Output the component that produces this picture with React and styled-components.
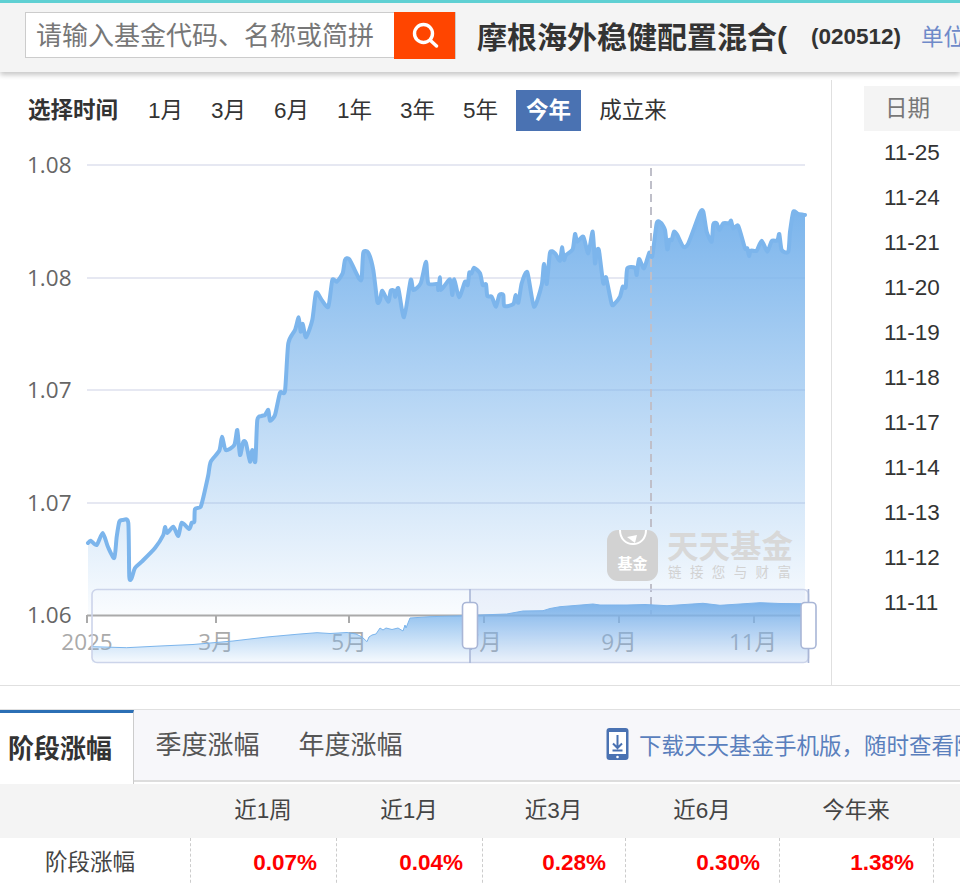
import React from "react";
import styled, { createGlobalStyle } from "styled-components";

const FONT = `"Liberation Sans", "Noto Sans CJK SC", sans-serif`;
const CHART_FONT = `"Open Sans", "Noto Sans CJK SC", sans-serif`;

const GlobalStyle = createGlobalStyle`
  html, body {
    margin: 0;
    height: 885px;
    overflow: hidden;
    background: #fff;
    font-family: ${FONT};
    color: #333;
  }
  * { box-sizing: border-box; }
`;

const ranges = ["1月", "3月", "6月", "1年", "3年", "5年", "今年", "成立来"];
const dates = ["11-25", "11-24", "11-21", "11-20", "11-19", "11-18", "11-17", "11-14", "11-13", "11-12", "11-11"];
const periods = ["近1周", "近1月", "近3月", "近6月", "今年来"];
const returns = ["0.07%", "0.04%", "0.28%", "0.30%", "1.38%"];

// traced from the chart, in page pixels
const line = [
  [88, 543], [90.7, 540.7], [96.7, 545], [102.7, 533], [108, 547], [114.3, 558], [116.7, 536.7], [119.3, 521.7],
  [123.3, 520], [128.3, 523], [129.3, 576.7], [131.7, 578], [135, 568], [141.7, 561.7], [155, 548], [163.3, 535],
  [165, 527], [167.3, 533], [173.3, 526.7], [178.3, 536], [181.7, 522.7], [189.3, 529], [191.7, 522.7], [194.3, 521.7],
  [195, 509], [200.7, 506.7], [205, 490], [208.3, 475], [210.7, 461.7], [219.3, 450.7], [222, 436.7], [225.7, 450],
  [234.3, 445], [237.3, 430], [240, 455], [243.3, 441.7], [246, 443], [250, 461.7], [252.3, 450], [255.3, 461.7],
  [257.3, 420], [261.7, 416], [265, 415], [268.3, 410], [270, 420.7], [275, 415], [280, 392.7], [285, 391],
  [288.3, 343.3], [295, 330], [298.7, 317.3], [300.7, 331.7], [302.7, 324], [306, 337.3], [312.3, 320], [316, 292.7],
  [321.7, 300], [328.3, 306.7], [332.3, 280], [336.7, 281.7], [342.7, 273.3], [345, 260], [349.3, 259.3], [359.3, 279],
  [361.7, 278.3], [363.3, 252.7], [368.3, 252.7], [373.3, 270], [377.3, 301.7], [380, 300], [382.3, 290.7], [388.3, 301.7],
  [390.7, 290.7], [394, 290.7], [395.3, 296.7], [398.3, 288.3], [404, 317.3], [410.7, 280], [413.3, 290], [420.7, 283.3],
  [426, 261.7], [428.3, 283.3], [437.3, 284], [438.3, 290], [440, 277.3], [441, 290], [450, 279.3], [452.3, 295],
  [454.3, 279.3], [459, 297.3], [465, 281.7], [467.7, 285], [469.3, 272.7], [471.7, 273.3], [474, 267.7], [480, 273.3],
  [482.7, 285], [486, 284.3], [487.3, 296], [491.7, 296.7], [496, 306.7], [499.3, 295], [503.3, 295], [504.3, 306],
  [513.3, 304], [515.7, 295], [518.3, 302.7], [521.7, 283.3], [527.3, 272.3], [534, 306.7], [541.7, 285], [544, 264],
  [546.7, 284], [550, 252.7], [555, 253.3], [560, 260.7], [562, 247.3], [564, 260], [566, 255], [572.7, 249.3],
  [575, 234], [577.3, 241.7], [583.3, 236.7], [588.3, 253.3], [592.7, 231.7], [595, 263.3], [596.7, 250.7], [599, 250.7],
  [603.3, 283.3], [606, 277.3], [611.7, 304], [615, 303.3], [620, 296.7], [622.7, 286.7], [625.7, 287.3], [627.3, 268.3],
  [635, 267.7], [636.7, 275], [639, 259], [644, 268.3], [649.3, 252.7], [652.3, 256], [656.7, 223.3], [660.7, 222.7],
  [665, 230], [667.3, 249.3], [669.3, 240], [671.7, 240], [674, 231.7], [677.3, 235], [683.3, 246.7], [688.3, 243.3],
  [700, 212.7], [703.3, 211.7], [706.7, 231.7], [711.7, 241.7], [713.3, 224.3], [716.7, 223.3], [719.3, 230], [723.3, 223.3],
  [729.3, 223.3], [731, 220.7], [733.3, 228.3], [738.3, 226], [745, 248.3], [747.3, 248.3], [749, 256], [750.7, 250.7],
  [756.7, 250.7], [761.7, 240.7], [767.3, 251.7], [771.7, 241], [777.3, 240.7], [779.3, 234], [781.7, 250], [788.3, 251.7],
  [790, 231.7], [793.3, 211.7], [798.3, 214], [805, 215],
];

const miniLine = [
  [92, 646.7], [126.7, 647.7], [160, 646], [193, 644.5], [233, 641], [267, 637], [300, 634], [317, 632.7], [330, 633.5], [347, 632.5],
  [356, 634], [362, 637], [367, 641.7], [369, 637], [372, 635], [376, 634], [380, 628], [383, 630], [386, 628], [392, 629.5],
  [398, 628], [403, 631], [405, 625], [406, 628], [410, 618], [430, 616.7], [463, 615.7], [480, 615], [506.7, 614], [523, 611],
  [543, 610.7], [550, 608.5], [560, 606.7], [575, 605.5], [593, 604], [600, 605], [627, 605], [645, 604.5], [667, 605.7], [703, 603.3],
  [720, 605.3], [740, 604], [760, 602.7], [780, 603.5], [800, 603.7], [808, 604],
];

const smooth = (pts) => {
  let d = `M${pts[0][0]} ${pts[0][1]}`;
  for (let i = 0; i < pts.length - 1; i++) {
    const p0 = pts[i - 1] || pts[i];
    const p1 = pts[i];
    const p2 = pts[i + 1];
    const p3 = pts[i + 2] || p2;
    const c1x = p1[0] + (p2[0] - p0[0]) / 9;
    const c1y = p1[1] + (p2[1] - p0[1]) / 9;
    const c2x = p2[0] - (p3[0] - p1[0]) / 9;
    const c2y = p2[1] - (p3[1] - p1[1]) / 9;
    d += `C${c1x.toFixed(1)} ${c1y.toFixed(1)} ${c2x.toFixed(1)} ${c2y.toFixed(1)} ${p2[0]} ${p2[1]}`;
  }
  return d;
};

const linePath = smooth(line);
const miniPath = `M${miniLine.map((p) => p.join(" ")).join("L")}`;

const Chart = () => (
  <ChartSvg viewBox="0 131 831 554">
    <defs>
      <linearGradient id="areaFill" gradientUnits="userSpaceOnUse" x1="0" y1="212" x2="0" y2="615">
        <stop offset="0" stopColor="#7cb5ec" />
        <stop offset="1" stopColor="#7cb5ec" stopOpacity="0.04" />
      </linearGradient>
      <linearGradient id="miniFill" gradientUnits="userSpaceOnUse" x1="0" y1="602" x2="0" y2="663">
        <stop offset="0" stopColor="#7cb5ec" />
        <stop offset="1" stopColor="#7cb5ec" stopOpacity="0.06" />
      </linearGradient>
    </defs>

    {[165, 278, 390, 503].map((y) => (
      <line key={y} x1="87" x2="805" y1={y} y2={y} stroke="#e6e8f2" strokeWidth="2" />
    ))}
    {[["1.08", 165], ["1.08", 278], ["1.07", 390], ["1.07", 503], ["1.06", 615]].map(([t, y]) => (
      <AxisText key={y} x="27" y={y + 8}>{t}</AxisText>
    ))}

    <path d={`${linePath}L805 615L88 615Z`} fill="url(#areaFill)" />
    <path d={linePath} fill="none" stroke="#7cb5ec" strokeWidth="4" strokeLinejoin="round" strokeLinecap="round" />

    <line x1="87" x2="805" y1="615.5" y2="615.5" stroke="#aaa" strokeWidth="2" />
    {[87, 216, 349, 484, 619, 754].map((x) => (
      <line key={x} x1={x} x2={x} y1="615" y2="623" stroke="#aaa" strokeWidth="2" />
    ))}
    {[["2025", 87], ["3月", 216], ["5月", 349], ["7月", 484], ["9月", 619], ["11月", 753]].map(([t, x]) => (
      <TickText key={t} x={x} y="650">{t}</TickText>
    ))}

    <line x1="651" x2="651" y1="168" y2="615" stroke="#bfbfc9" strokeWidth="2" strokeDasharray="8 5" />

    <g>
      <rect x="607" y="530" width="51" height="51" rx="11" fill="#d2d2d2" />
      <path d="M620 530c0 9 6 14 13 14s13-5 13-14" fill="none" stroke="#fff" strokeWidth="2" />
      <path d="M627 537l10-2-2 8z" fill="#fff" />
      <WatermarkBadge x="632.5" y="569">基金</WatermarkBadge>
      <WatermarkTitle x="667" y="558">天天基金</WatermarkTitle>
      <WatermarkSub x="668" y="577">链接您与财富</WatermarkSub>
    </g>

    <path d={`${miniPath}L808 663L92 663Z`} fill="url(#miniFill)" />
    <path d={miniPath} fill="none" stroke="#7cb5ec" strokeWidth="1" />
    <rect x="470" y="589.5" width="338.5" height="73" fill="#87a5e0" fillOpacity="0.1" />
    <rect x="92" y="589.5" width="716.5" height="73" rx="5" fill="none" stroke="#ccd4ea" strokeWidth="1.6" />
    {[470, 808.5].map((x) => (
      <g key={x}>
        <line x1={x} x2={x} y1="589" y2="663" stroke="#a9b6d6" strokeWidth="1.6" />
        <rect x={x - 7.5} y="602.5" width="15" height="46" rx="4" fill="#fff" stroke="#a9b6d6" strokeWidth="1.6" />
      </g>
    ))}
  </ChartSvg>
);

const App = () => (
  <>
    <GlobalStyle />
    <Header>
      <SearchBox>
        <SearchInput placeholder="请输入基金代码、名称或简拼" />
        <SearchButton>
          <svg width="28" height="26" viewBox="0 0 28 26" fill="none" stroke="#fff" strokeLinecap="round">
            <circle cx="12.5" cy="11.5" r="9" strokeWidth="3.4" />
            <path d="M19.5 18.5l6 5.5" strokeWidth="3.4" />
          </svg>
        </SearchButton>
      </SearchBox>
      <FundName>摩根海外稳健配置混合(</FundName>
      <FundCode>(020512)</FundCode>
      <UnitLink>单位净值</UnitLink>
    </Header>

    <Main>
      <ChartPanel>
        <RangeBar>
          <RangeLabel>选择时间</RangeLabel>
          {ranges.map((r) => (
            <RangeItem key={r} $active={r === "今年"}>{r}</RangeItem>
          ))}
        </RangeBar>
        <Chart />
      </ChartPanel>
      <DatePanel>
        <DateHead>日期</DateHead>
        {dates.map((d) => (
          <DateRow key={d}>{d}</DateRow>
        ))}
      </DatePanel>
    </Main>

    <TabBar>
      <Tab $active>阶段涨幅</Tab>
      <Tab>季度涨幅</Tab>
      <Tab>年度涨幅</Tab>
      <DownloadLink>
        <svg width="23" height="32" viewBox="0 0 23 32">
          <rect width="22" height="32" x="0.5" rx="3" fill="#4a72b2" />
          <rect x="3" y="4" width="17" height="22" fill="#fff" />
          <path d="M11.5 7v12M7 15.5l4.5 4.5 4.5-4.5M6.5 22.5h10" fill="none" stroke="#4a72b2" strokeWidth="2" />
          <circle cx="11.5" cy="29" r="1.3" fill="#fff" />
        </svg>
        下载天天基金手机版，随时查看阶段涨幅
      </DownloadLink>
    </TabBar>

    <HeadRow>
      <span />
      {periods.map((p) => (
        <HeadCell key={p}>{p}</HeadCell>
      ))}
    </HeadRow>
    <ValueRow>
      <RowTitle>阶段涨幅</RowTitle>
      {returns.map((v) => (
        <ValueCell key={v}>{v}</ValueCell>
      ))}
      <ValueCell />
    </ValueRow>
  </>
);

const Header = styled.header`
  display: flex;
  align-items: center;
  height: 72px;
  padding: 0 0 0 25px;
  border-top: 3px solid #5fd0d3;
  background: #f4f4f4;
  box-shadow: 0 3px 5px rgba(0, 0, 0, 0.22);
  position: relative;
  white-space: nowrap;
`;

const SearchBox = styled.div`
  display: flex;
  width: 431px;
  height: 47px;
  flex-shrink: 0;
  margin-top: -5px;
`;

const SearchInput = styled.input`
  width: 369px;
  height: 46px;
  padding: 3px 0 0 10px;
  border: 1px solid #ccc;
  border-right: 0;
  outline: 0;
  background: #fff;
  font: 26px ${FONT};
  &::placeholder {
    color: #777;
    opacity: 1;
  }
`;

const SearchButton = styled.div`
  display: flex;
  align-items: center;
  justify-content: center;
  width: 62px;
  height: 47px;
  background: #ff4500;
  border-right: 1px solid #ccc;
`;

const FundName = styled.div`
  margin: 0 0 6px 21px;
  font-size: 30px;
  font-weight: 700;
  color: #333;
`;

const FundCode = styled.div`
  margin: 0 0 2px 24px;
  font-size: 22.5px;
  font-weight: 700;
  color: #333;
`;

const UnitLink = styled.div`
  margin: 0 0 6px 20px;
  font-size: 22.5px;
  color: #6f8ac9;
`;

const Main = styled.main`
  display: flex;
  height: 614px;
  padding-top: 8px;
  border-bottom: 1px solid #e0e0e0;
  overflow: hidden;
`;

const ChartPanel = styled.section`
  width: 832px;
  flex-shrink: 0;
  border-right: 1px solid #e0e0e0;
`;

const RangeBar = styled.div`
  display: flex;
  align-items: center;
  height: 51px;
  padding: 10px 0 0 28px;
`;

const RangeLabel = styled.div`
  margin-right: 20px;
  line-height: 41px;
  font-size: 22.5px;
  font-weight: 700;
  color: #333;
`;

const RangeItem = styled.div`
  height: 41px;
  line-height: 41px;
  margin: 0 8px 0 0;
  padding: 0 10px;
  font-size: 22.5px;
  color: ${(p) => (p.$active ? "#fff" : "#333")};
  font-weight: ${(p) => (p.$active ? 700 : 400)};
  background: ${(p) => (p.$active ? "#4a72b2" : "transparent")};
`;

const ChartSvg = styled.svg`
  display: block;
  width: 831px;
  height: 554px;
`;

const AxisText = styled.text`
  font: 22.5px ${CHART_FONT};
  fill: #666;
`;

const TickText = styled.text`
  font: 22.5px ${CHART_FONT};
  fill: #aaa;
  text-anchor: middle;
`;

const WatermarkBadge = styled.text`
  font: 700 15px ${FONT};
  fill: #fff;
  text-anchor: middle;
`;

const WatermarkTitle = styled.text`
  font: 700 31.5px ${FONT};
  fill: #d8d8d8;
`;

const WatermarkSub = styled.text`
  font: 13.5px ${FONT};
  fill: #d2d2d2;
  letter-spacing: 8.4px;
`;

const DatePanel = styled.aside`
  flex: 1;
  padding: 6px 0 0 32px;
`;

const DateHead = styled.div`
  height: 45px;
  line-height: 45px;
  padding-left: 21px;
  background: #f4f4f4;
  font-size: 22.5px;
  color: #777;
`;

const DateRow = styled.div`
  height: 45px;
  line-height: 44px;
  padding-left: 20px;
  font-size: 22.5px;
  color: #333;
`;

const TabBar = styled.nav`
  display: flex;
  align-items: flex-start;
  height: 73px;
  margin: 23px 0 2px;
  border-top: 1px solid #e0e0e0;
  border-bottom: 2px solid #ddd;
  background: #f7f7fa;
  white-space: nowrap;
`;

const Tab = styled.div`
  flex-shrink: 0;
  font-size: 26px;
  ${(p) =>
    p.$active
      ? `
    width: 134px;
    height: 74px;
    line-height: 72px;
    padding-left: 8px;
    margin-right: 2px;
    border-top: 3px solid #2b6fb5;
    border-right: 1px solid #ccc;
    background: #fff;
    font-weight: 700;
    color: #333;
    position: relative;
  `
      : `
    height: 70px;
    line-height: 71px;
    padding: 0 19.5px;
    color: #555;
  `}
`;

const DownloadLink = styled.div`
  display: flex;
  align-items: center;
  flex-shrink: 0;
  gap: 10px;
  height: 70px;
  margin-left: 184px;
  padding-bottom: 2px;
  font-size: 22.5px;
  color: #5a7fbd;
`;

const columns = "190px 146px 146px 143px 154px 154px 27px";

const HeadRow = styled.div`
  display: grid;
  grid-template-columns: ${columns};
  height: 54px;
  background: #f4f4f4;
`;

const HeadCell = styled.div`
  text-align: center;
  line-height: 54px;
  font-size: 22.5px;
  color: #444;
`;

const ValueRow = styled.div`
  display: grid;
  grid-template-columns: ${columns};
  height: 47px;
`;

const RowTitle = styled.div`
  padding-right: 10px;
  text-align: center;
  line-height: 50px;
  font-size: 22.5px;
  color: #444;
`;

const ValueCell = styled.div`
  padding-right: 19px;
  text-align: right;
  line-height: 50px;
  border-left: 1px dashed #ccc;
  font-size: 22.5px;
  font-weight: 700;
  color: #f00;
`;

export default App;
